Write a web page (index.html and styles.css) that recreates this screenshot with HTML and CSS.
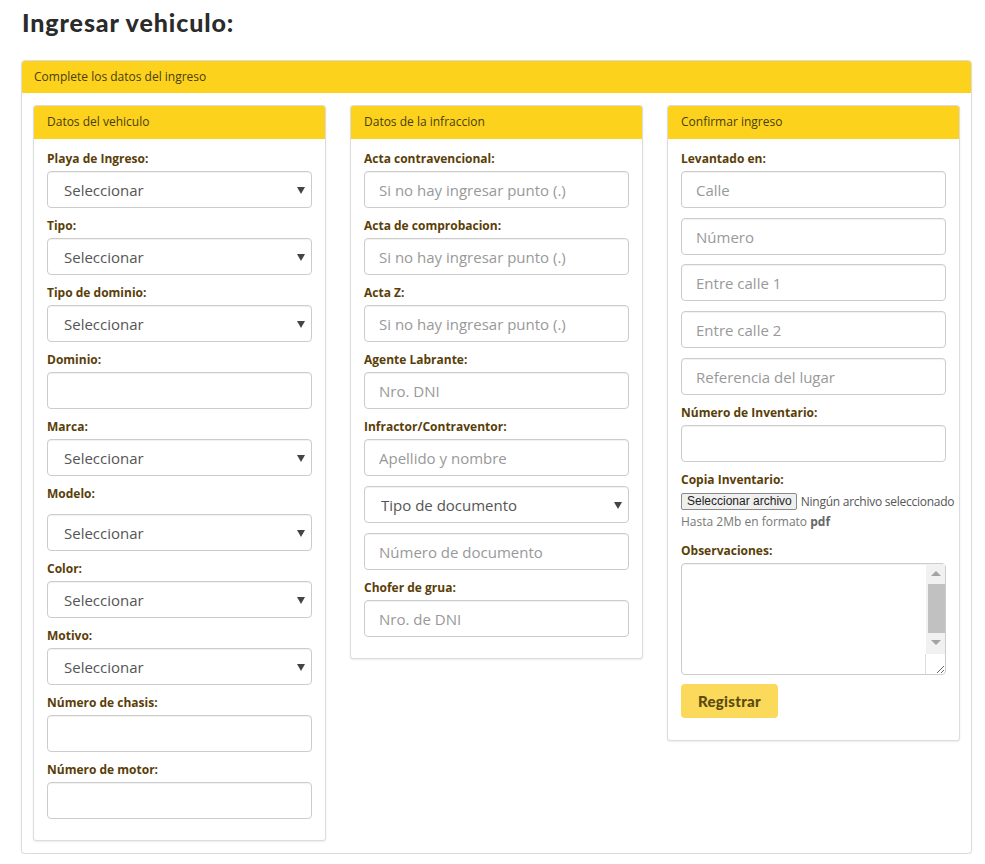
FILE: index.html
```html
<!DOCTYPE html>
<html lang="es">
<head>
<meta charset="utf-8">
<title>Ingresar vehiculo</title>
<link rel="stylesheet" href="styles.css">
</head>
<body>
<div class="page">
  <h1 class="title">Ingresar vehiculo:</h1>
  <div class="panel outer">
    <div class="panel-head outer-head">Complete los datos del ingreso</div>
    <div class="outer-body">
      <div class="panel col">
        <div class="panel-head">Datos del vehiculo</div>
        <div class="panel-body">
          <div class="field"><label class="lbl">Playa de Ingreso:</label><div class="sel"><select class="ctl"><option>Seleccionar</option></select></div></div>
          <div class="field"><label class="lbl">Tipo:</label><div class="sel"><select class="ctl"><option>Seleccionar</option></select></div></div>
          <div class="field"><label class="lbl">Tipo de dominio:</label><div class="sel"><select class="ctl"><option>Seleccionar</option></select></div></div>
          <div class="field"><label class="lbl">Dominio:</label><input class="ctl" type="text"></div>
          <div class="field"><label class="lbl">Marca:</label><div class="sel"><select class="ctl"><option>Seleccionar</option></select></div></div>
          <div class="field"><label class="lbl lbl-gap">Modelo:</label><div class="sel"><select class="ctl"><option>Seleccionar</option></select></div></div>
          <div class="field"><label class="lbl">Color:</label><div class="sel"><select class="ctl"><option>Seleccionar</option></select></div></div>
          <div class="field"><label class="lbl">Motivo:</label><div class="sel"><select class="ctl"><option>Seleccionar</option></select></div></div>
          <div class="field"><label class="lbl">Número de chasis:</label><input class="ctl" type="text"></div>
          <div class="field"><label class="lbl">Número de motor:</label><input class="ctl" type="text"></div>
        </div>
      </div>
      <div class="panel col">
        <div class="panel-head">Datos de la infraccion</div>
        <div class="panel-body">
          <div class="field"><label class="lbl">Acta contravencional:</label><input class="ctl" type="text" placeholder="Si no hay ingresar punto (.)"></div>
          <div class="field"><label class="lbl">Acta de comprobacion:</label><input class="ctl" type="text" placeholder="Si no hay ingresar punto (.)"></div>
          <div class="field"><label class="lbl">Acta Z:</label><input class="ctl" type="text" placeholder="Si no hay ingresar punto (.)"></div>
          <div class="field"><label class="lbl">Agente Labrante:</label><input class="ctl" type="text" placeholder="Nro. DNI"></div>
          <div class="field stack"><label class="lbl">Infractor/Contraventor:</label>
            <input class="ctl" type="text" placeholder="Apellido y nombre">
            <div class="sel"><select class="ctl"><option>Tipo de documento</option></select></div>
            <input class="ctl" type="text" placeholder="Número de documento">
          </div>
          <div class="field"><label class="lbl">Chofer de grua:</label><input class="ctl" type="text" placeholder="Nro. de DNI"></div>
        </div>
      </div>
      <div class="panel col">
        <div class="panel-head">Confirmar ingreso</div>
        <div class="panel-body">
          <div class="field stack addr"><label class="lbl">Levantado en:</label>
            <input class="ctl" type="text" placeholder="Calle">
            <input class="ctl" type="text" placeholder="Número">
            <input class="ctl" type="text" placeholder="Entre calle 1">
            <input class="ctl" type="text" placeholder="Entre calle 2">
            <input class="ctl" type="text" placeholder="Referencia del lugar">
          </div>
          <div class="field"><label class="lbl">Número de Inventario:</label><input class="ctl" type="text"></div>
          <div class="field"><label class="lbl">Copia Inventario:</label>
            <div class="file-row"><span class="file-btn">Seleccionar archivo</span><span class="file-name">Ningún archivo seleccionado</span></div>
            <div class="help">Hasta 2Mb en formato <b>pdf</b></div>
          </div>
          <div class="field"><label class="lbl">Observaciones:</label>
            <div class="area-wrap">
              <textarea class="ctl area"></textarea>
              <div class="fake-scroll">
                <span class="arrow up"></span>
                <span class="thumb"></span>
                <span class="arrow down"></span>
              </div>
              <div class="fake-corner"></div>
            </div>
          </div>
          <button class="btn" type="button">Registrar</button>
        </div>
      </div>
    </div>
  </div>
</div>
</body>
</html>
```
FILE: styles.css
```css
* { box-sizing: border-box; }
body {
  margin: 0;
  background: #fff;
  font-family: "Open Sans", "Liberation Sans", sans-serif;
  color: #333;
}
.page {
  padding: 7px 13px 0 21px;
}
.title {
  margin: 0 0 23px 1px;
  font-family: Lato, "Open Sans", sans-serif;
  font-weight: 900;
  font-size: 25px;
  line-height: 30px;
  color: #2b2b2b;
  letter-spacing: 0.9px;
}
.panel {
  background: #fff;
  border: 1px solid #dcdcdc;
  border-radius: 4px;
  box-shadow: 0 1px 2px rgba(0,0,0,0.08);
  overflow: hidden;
}
.panel-head {
  background: #fcd21c;
  height: 33px;
  line-height: 32px;
  padding: 0 13px;
  font-size: 12px;
  color: #4a3d10;
}
.outer-head {
  height: 32px;
  padding: 0 12px;
  line-height: 31px;
}
.outer-body {
  display: grid;
  grid-template-columns: 1fr 1fr 1fr;
  column-gap: 24px;
  align-items: start;
  padding: 12px 11px 12px 11px;
}
.col { border-radius: 3px; }
.panel-body {
  padding: 11px 13px 12px 13px;
}
.field {
  display: flex;
  flex-direction: column;
  margin-bottom: 9px;
}
.lbl {
  font-size: 12px;
  font-weight: 700;
  line-height: 17px;
  color: #5a3e08;
  margin-bottom: 4px;
}
.lbl-gap { margin-bottom: 12px; }
.stack > .ctl, .stack > .sel { margin-bottom: 10px; }
.addr > :nth-child(3) { margin-bottom: 9px; }
.stack > :last-child { margin-bottom: 0; }
.ctl {
  display: block;
  width: 100%;
  height: 37px;
  border: 1px solid #cccccc;
  border-radius: 4px;
  background: #fff;
  font-family: "Open Sans", "Liberation Sans", sans-serif;
  font-size: 15px;
  color: #555;
  padding: 0 14px;
  box-shadow: inset 0 1px 1px rgba(0,0,0,0.06);
  outline: none;
}
.ctl::placeholder { color: #999; }
.sel { position: relative; }
.sel .ctl {
  appearance: none;
  -webkit-appearance: none;
  padding-left: 16px;
}
.sel::after {
  content: "";
  position: absolute;
  right: 7px;
  top: 16px;
  border-left: 4px solid transparent;
  border-right: 4px solid transparent;
  border-top: 7px solid #444;
  pointer-events: none;
}
.file-row {
  display: flex;
  align-items: center;
  height: 18px;
  white-space: nowrap;
}
.file-btn {
  font-family: "Liberation Sans", Arial, sans-serif;
  font-size: 12px;
  line-height: 15px;
  padding: 0 4px 0 5px;
  border: 1px solid #8a8a8a;
  border-radius: 2px;
  background: #efefef;
  color: #222;
}
.file-name {
  margin-left: 4px;
  font-size: 12px;
  letter-spacing: -0.25px;
  color: #555;
}
.help {
  margin-top: 3px;
  font-size: 12px;
  line-height: 17px;
  color: #777;
  margin-bottom: 3px;
}
.help b { color: #666; }
.area-wrap { position: relative; }
.area {
  height: 112px;
  resize: vertical;
  overflow: hidden;
  padding: 6px 12px;
}
.fake-scroll {
  position: absolute;
  top: 1px;
  right: 1px;
  width: 19px;
  height: 90px;
  background: #f1f1f1;
  pointer-events: none;
}
.fake-scroll .thumb {
  position: absolute;
  left: 2px;
  right: 0;
  top: 20px;
  height: 49px;
  background: #c1c1c1;
}
.fake-scroll .arrow {
  position: absolute;
  left: 5px;
  border-left: 5px solid transparent;
  border-right: 5px solid transparent;
}
.fake-scroll .up {
  top: 7px;
  border-bottom: 5px solid #a3a3a3;
}
.fake-scroll .down {
  top: 76px;
  border-top: 5px solid #a3a3a3;
}
.fake-corner {
  position: absolute;
  right: 1px;
  bottom: 1px;
  width: 20px;
  height: 20px;
  border-left: 1px solid #ddd;
  pointer-events: none;
}
.btn {
  display: block;
  width: 97px;
  height: 34px;
  margin: 0 0 10px;
  border: none;
  border-radius: 4px;
  background: #fbd95a;
  color: #5a4a10;
  font-family: Lato, "Open Sans", sans-serif;
  font-weight: 900;
  font-size: 15px;
  letter-spacing: 0.3px;
  cursor: pointer;
}
```
